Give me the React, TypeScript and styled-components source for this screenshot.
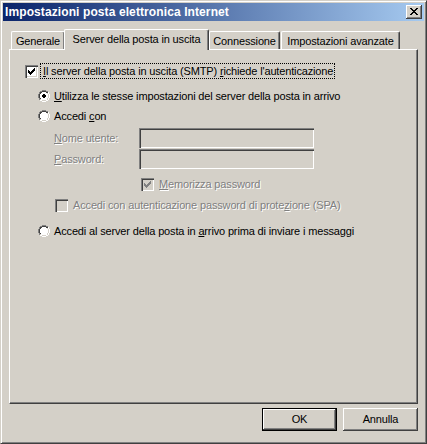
import React from 'react';
import styled, { createGlobalStyle } from 'styled-components';

const GlobalStyle = createGlobalStyle`
  html, body { margin: 0; padding: 0; background: #d4d0c8; }
  body { font-family: "Liberation Sans", Arial, sans-serif; font-size: 11px; color: #000; letter-spacing: -0.15px; }
  * { box-sizing: border-box; }
`;

const FACE = '#d4d0c8';

const Window = styled.div`
  width: 427px;
  height: 444px;
  background: ${FACE};
  border: 1px solid;
  border-color: ${FACE} #404040 #404040 ${FACE};
  box-shadow: inset 1px 1px 0 #fff, inset -1px -1px 0 #808080;
  padding: 2px;
  display: flex;
  flex-direction: column;
`;

const TitleBar = styled.div`
  height: 18px;
  flex: none;
  background: linear-gradient(to right, #0a246a, #a6caf0);
  display: flex;
  align-items: center;
  justify-content: space-between;
  padding: 0 2px 0 2px;
`;

const TitleText = styled.span`
  color: #fff;
  font-weight: bold;
  font-size: 12px;
  letter-spacing: 0.1px;
  line-height: 14px;
`;

const Raised = styled.div`
  background: ${FACE};
  box-shadow: inset -1px -1px 0 #404040, inset 1px 1px 0 #fff, inset -2px -2px 0 #808080, inset 2px 2px 0 ${FACE};
`;

const CloseBtn = styled(Raised)`
  width: 16px;
  height: 14px;
  display: flex;
  padding: 3px 0 0 4px;
`;

const Body = styled.div`
  flex: 1;
  display: flex;
  flex-direction: column;
  padding: 8px 6px 0 6px;
`;

const TabStrip = styled.div`
  height: 20px;
  display: flex;
  align-items: flex-end;
  padding-left: 2px;
  position: relative;
  z-index: 2;
`;

const Tab = styled.div<{ $active?: boolean; $w: number; $ml?: number }>`
  width: ${p => p.$w}px;
  height: ${p => (p.$active ? 21 : 18)}px;
  margin-left: ${p => p.$ml ?? 0}px;
  margin-bottom: ${p => (p.$active ? -1 : 0)}px;
  background: ${FACE};
  border-top: 1px solid #fff;
  border-left: 1px solid #fff;
  border-right: 1px solid #404040;
  box-shadow: inset -1px 0 0 #808080;
  border-radius: 2px 2px 0 0;
  display: flex;
  justify-content: center;
  padding-top: 3px;
  line-height: 13px;
  white-space: nowrap;
  position: relative;
  z-index: ${p => (p.$active ? 3 : 1)};
`;

const Panel = styled.div`
  height: 355px;
  flex: none;
  border: 1px solid;
  border-color: #fff #404040 #404040 #fff;
  box-shadow: inset -1px -1px 0 #808080;
  display: flex;
  flex-direction: column;
  padding: 13px 0 0 15px;
  position: relative;
  z-index: 1;
`;

const Row = styled.div<{ $mt?: number; $ml?: number }>`
  height: 16px;
  display: flex;
  align-items: center;
  margin-top: ${p => p.$mt ?? 0}px;
  margin-left: ${p => p.$ml ?? 0}px;
  white-space: nowrap;
  line-height: 13px;
`;

const Section = styled.div<{ $ml: number }>`
  display: flex;
  flex-direction: column;
  margin-left: ${p => p.$ml}px;
`;

const FocusLabel = styled.span`
  margin-left: 2px;
  border: 1px dotted #000;
  padding: 1px 1px 0 2px;
  line-height: 13px;
`;

const Label = styled.span<{ $disabled?: boolean; $gap?: number }>`
  margin-left: ${p => p.$gap ?? 5}px;
  color: ${p => (p.$disabled ? '#808080' : '#000')};
  text-shadow: ${p => (p.$disabled ? '1px 1px 0 #fff' : 'none')};
`;

const CredGrid = styled.div`
  display: grid;
  grid-template-columns: 85px 175px;
  grid-auto-rows: 20px;
  row-gap: 1px;
  margin-top: 4px;
  align-items: center;
`;

const FieldLabel = styled.span`
  color: #808080;
  text-shadow: 1px 1px 0 #fff;
  line-height: 13px;
`;

const Input = styled.div`
  height: 20px;
  background: ${FACE};
  box-shadow: inset 1px 1px 0 #808080, inset 2px 2px 0 #404040, inset -1px -1px 0 #fff, inset -2px -2px 0 ${FACE};
`;

const CheckBox = styled.span<{ $disabled?: boolean }>`
  width: 13px;
  height: 13px;
  flex: none;
  display: flex;
  padding: 3px 0 0 3px;
  background: ${p => (p.$disabled ? FACE : '#fff')};
  box-shadow: inset 1px 1px 0 #808080, inset 2px 2px 0 #404040, inset -1px -1px 0 #fff, inset -2px -2px 0 ${FACE};
`;

const ButtonRow = styled.div`
  display: flex;
  justify-content: flex-end;
  gap: 6px;
  margin-top: 4px;
`;

const PushButton = styled(Raised)<{ $default?: boolean }>`
  width: 75px;
  height: 23px;
  display: flex;
  align-items: center;
  justify-content: center;
  line-height: 13px;
  ${p =>
    p.$default
      ? `box-shadow: inset 0 0 0 1px #000, inset -2px -2px 0 #404040, inset 2px 2px 0 #fff, inset -3px -3px 0 #808080;`
      : ''}
`;

type Palette = Record<string, string>;

const Pixels: React.FC<{ rows: string[]; palette: Palette }> = ({ rows, palette }) => (
  <svg width={rows[0].length} height={rows.length} shapeRendering="crispEdges" style={{ display: 'block' }}>
    {rows.flatMap((r, y) =>
      r.split('').map((c, x) =>
        palette[c] ? <rect key={`${x}-${y}`} x={x} y={y} width={1} height={1} fill={palette[c]} /> : null
      )
    )}
  </svg>
);

const CHECK = [
  '......k',
  '.....kk',
  'k...kkk',
  'kk.kkk.',
  'kkkkk..',
  '.kkk...',
  '..k....',
];

const CLOSE_X = [
  'kk....kk',
  '.kk..kk.',
  '..kkkk..',
  '...kk...',
  '..kkkk..',
  '.kk..kk.',
  'kk....kk',
];

const RADIO = [
  '....gggg....',
  '..ggddddgg..',
  '.gddwwwwddw.',
  '.gdwwwwwwlw.',
  'gdwwwwwwwwlw',
  'gdwwwwwwwwlw',
  'gdwwwwwwwwlw',
  'gdwwwwwwwwlw',
  '.gdwwwwwwlw.',
  '.glwwwwwwlw.',
  '..wwllllww..',
  '....wwww....',
];

const RADIO_ON = RADIO.map((r, y) => {
  const dot = ['.kk.', 'kkkk', 'kkkk', '.kk.'];
  if (y < 4 || y > 7) return r;
  const d = dot[y - 4];
  return r.split('').map((c, x) => (x >= 4 && x <= 7 && d[x - 4] === 'k' ? 'k' : c)).join('');
});

const RADIO_PAL: Palette = { g: '#808080', d: '#404040', w: '#fff', l: FACE, k: '#000' };

const Radio: React.FC<{ on?: boolean }> = ({ on }) => <Pixels rows={on ? RADIO_ON : RADIO} palette={RADIO_PAL} />;

const Check: React.FC<{ checked?: boolean; disabled?: boolean }> = ({ checked, disabled }) => (
  <CheckBox $disabled={disabled}>
    {checked && <Pixels rows={CHECK} palette={{ k: disabled ? '#808080' : '#000' }} />}
  </CheckBox>
);

export default function App() {
  return (
    <>
      <GlobalStyle />
      <Window>
        <TitleBar>
          <TitleText>Impostazioni posta elettronica Internet</TitleText>
          <CloseBtn>
            <Pixels rows={CLOSE_X} palette={{ k: '#000' }} />
          </CloseBtn>
        </TitleBar>
        <Body>
          <TabStrip>
            <Tab $w={54}>Generale</Tab>
            <Tab $w={145} $ml={-1} $active>
              Server della posta in uscita
            </Tab>
            <Tab $w={71}>Connessione</Tab>
            <Tab $w={119} $ml={1}>
              Impostazioni avanzate
            </Tab>
          </TabStrip>
          <Panel>
            <Row $mt={0}>
              <Check checked />
              <FocusLabel>
                <u>I</u>l server della posta in uscita (SMTP) <u>r</u>ichiede l'autenticazione
              </FocusLabel>
            </Row>
            <Section $ml={13}>
              <Row $mt={9}>
                <Radio on />
                <Label $gap={4}>
                  <u>U</u>tilizza le stesse impostazioni del server della posta in arrivo
                </Label>
              </Row>
              <Row $mt={4}>
                <Radio />
                <Label $gap={4}>
                  Accedi <u>c</u>on
                </Label>
              </Row>
              <Section $ml={16}>
                <CredGrid>
                  <FieldLabel>
                    <u>N</u>ome utente:
                  </FieldLabel>
                  <Input />
                  <FieldLabel>
                    <u>P</u>assword:
                  </FieldLabel>
                  <Input />
                </CredGrid>
                <Row $mt={7} $ml={87}>
                  <Check checked disabled />
                  <Label $disabled>
                    <u>M</u>emorizza password
                  </Label>
                </Row>
                <Row $mt={5} $ml={1}>
                  <Check disabled />
                  <Label $disabled>
                    Accedi con autenticazione password di prote<u>z</u>ione (SPA)
                  </Label>
                </Row>
              </Section>
              <Row $mt={10}>
                <Radio />
                <Label $gap={4}>
                  Accedi al server della posta in <u>a</u>rrivo prima di inviare i messaggi
                </Label>
              </Row>
            </Section>
          </Panel>
          <ButtonRow>
            <PushButton $default>OK</PushButton>
            <PushButton>Annulla</PushButton>
          </ButtonRow>
        </Body>
      </Window>
    </>
  );
}
